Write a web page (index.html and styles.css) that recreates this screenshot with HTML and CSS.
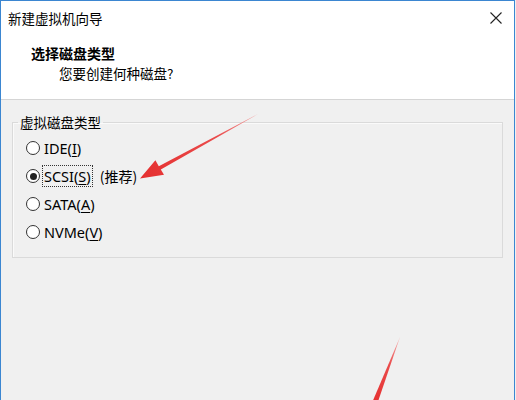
FILE: index.html
```html
<!DOCTYPE html>
<html lang="zh-CN">
<head>
    <meta charset="UTF-8">
    <meta name="viewport" content="width=device-width, initial-scale=1.0">
    <title>新建虚拟机向导</title>
    <link rel="stylesheet" href="styles.css">
</head>
<body>
    <div class="window">
        <!-- 标题栏 -->
        <div class="titlebar">
            <span class="title">新建虚拟机向导</span>
            <svg class="close" width="12" height="12" viewBox="0 0 12 12">
                <path d="M0.5 0.5 L11.5 11.5 M11.5 0.5 L0.5 11.5" stroke="#222" stroke-width="1.1" fill="none"/>
            </svg>
        </div>
        <div class="header">
            <h1>选择磁盘类型</h1>
            <p>您要创建何种磁盘?</p>
        </div>
        <div class="content">
            <fieldset class="group">
                <legend>虚拟磁盘类型</legend>
                <div class="option">
                    <span class="radio"></span>
                    <span class="label">IDE(<u>I</u>)</span>
                </div>
                <div class="option">
                    <span class="radio checked"></span>
                    <span class="label focus">SCSI(<u>S</u>)</span>
                    <span class="note">(推荐)</span>
                </div>
                <div class="option">
                    <span class="radio"></span>
                    <span class="label">SATA(<u>A</u>)</span>
                </div>
                <div class="option">
                    <span class="radio"></span>
                    <span class="label">NVMe(<u>V</u>)</span>
                </div>
            </fieldset>
        </div>
        <!-- 红色箭头标注 -->
        <svg class="arrows" width="516" height="400" viewBox="0 0 516 400">
            <defs>
                <linearGradient id="g1" x1="258" y1="114" x2="140" y2="178" gradientUnits="userSpaceOnUse">
                    <stop offset="0" stop-color="#f4a0a0"/>
                    <stop offset="0.35" stop-color="#ea4b4b"/>
                    <stop offset="1" stop-color="#e52f2f"/>
                </linearGradient>
                <linearGradient id="g2" x1="400" y1="337" x2="372" y2="405" gradientUnits="userSpaceOnUse">
                    <stop offset="0" stop-color="#f6b0b0"/>
                    <stop offset="0.4" stop-color="#ea4b4b"/>
                    <stop offset="1" stop-color="#e52f2f"/>
                </linearGradient>
            </defs>
            <polygon fill="url(#g1)" points="258,114 158.8,166.2 155.4,160.2 140,178.5 164,174.8 160.8,169.6"/>
            <polygon fill="url(#g2)" points="400,337 376.5,406 371.5,404"/>
        </svg>
    </div>
</body>
</html>
```
FILE: styles.css
```css
body {
    margin: 0;
    width: 516px;
    height: 400px;
    overflow: hidden;
    background-color: #f0f0f0;
    font-family: "Noto Sans", "Noto Sans CJK SC", sans-serif;
    color: #000;
}

.window {
    position: relative;
    width: 513px;
    height: 399px;
    border-top: 1px solid #3b86d1;
    border-left: 1px solid #3b86d1;
    border-right: 1px solid #3b86d1;
    background-color: #f0f0f0;
}

.titlebar {
    height: 33px;
    background-color: #fff;
    display: flex;
    align-items: center;
    justify-content: space-between;
    padding: 0 12px 0 7px;
}
.title {
    font-family: "Noto Sans CJK SC", sans-serif;
    font-size: 13.5px;
}

.header {
    height: 66px;
    background-color: #fff;
    border-bottom: 1px solid #d5d5d5;
    padding-top: 1px;
    box-sizing: border-box;
}
.header h1 {
    margin: 8px 0 0 30px;
    font-family: "Noto Sans CJK SC", sans-serif;
    font-size: 14px;
    font-weight: bold;
    line-height: 20px;
}
.header p {
    margin: 0 0 0 58px;
    font-family: "Noto Sans CJK SC", sans-serif;
    font-size: 13.5px;
    line-height: 20px;
}

.content {
    padding: 12px 11px 0 11px;
}

.group {
    margin: 0;
    padding: 2px 0 11px 0;
    border: 1px solid #dadada;
    box-shadow: 1px 1px 0 #fafafa inset;
}
.group legend {
    margin-left: 5px;
    padding: 0 2px;
    font-family: "Noto Sans CJK SC", sans-serif;
    font-size: 13.5px;
    line-height: 20px;
}

.option {
    height: 28px;
    display: flex;
    align-items: center;
    padding-left: 13px;
    font-size: 14.5px;
}
.radio {
    flex-shrink: 0;
    width: 12px;
    height: 12px;
    border: 1px solid #333;
    border-radius: 50%;
    background-color: #fff;
    display: flex;
    align-items: center;
    justify-content: center;
    margin-right: 3px;
}
.radio.checked::after {
    content: "";
    width: 7px;
    height: 7px;
    border-radius: 50%;
    background-color: #222;
}
.label {
    line-height: 20px;
    padding: 0 1px;
}
.label u {
    text-underline-offset: 2px;
}
.focus {
    outline: 1px dotted #333;
}
.note {
    margin-left: 8px;
    font-family: "Noto Sans CJK SC", sans-serif;
    font-size: 14px;
}

.close {
    display: block;
}

.arrows {
    position: absolute;
    top: -1px;
    left: -1px;
    pointer-events: none;
}
```
